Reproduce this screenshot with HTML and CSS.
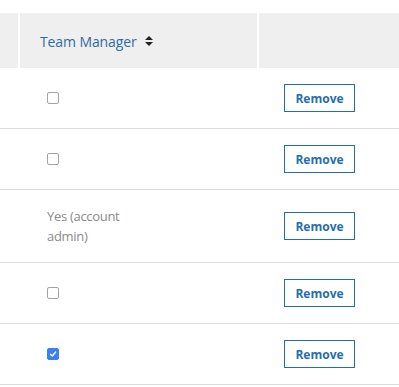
FILE: index.html
```html
<!DOCTYPE html>
<html lang="en">
<head>
    <meta charset="UTF-8">
    <title>Team members</title>
    <link rel="stylesheet" href="styles.css">
</head>
<body>
    <table class="members">
        <thead>
            <tr>
                <th class="col-edge"></th>
                <th class="col-manager">
                    <span class="sortable">Team Manager
                        <svg class="sort-icon" width="8" height="10" viewBox="0 0 8 10">
                            <path d="M4 0 L8 4 H0 Z" fill="#222"/>
                            <path d="M4 10 L8 6 H0 Z" fill="#222"/>
                        </svg>
                    </span>
                </th>
                <th class="col-action"></th>
            </tr>
        </thead>
        <tbody>
            <tr>
                <td class="col-edge"></td>
                <td class="col-manager"><input type="checkbox" class="check"></td>
                <td class="col-action"><button class="remove-btn">Remove</button></td>
            </tr>
            <tr>
                <td class="col-edge"></td>
                <td class="col-manager"><input type="checkbox" class="check"></td>
                <td class="col-action"><button class="remove-btn">Remove</button></td>
            </tr>
            <tr>
                <td class="col-edge"></td>
                <td class="col-manager"><span class="admin-note">Yes (account admin)</span></td>
                <td class="col-action"><button class="remove-btn">Remove</button></td>
            </tr>
            <tr>
                <td class="col-edge"></td>
                <td class="col-manager"><input type="checkbox" class="check"></td>
                <td class="col-action"><button class="remove-btn">Remove</button></td>
            </tr>
            <tr>
                <td class="col-edge"></td>
                <td class="col-manager"><input type="checkbox" class="check" checked></td>
                <td class="col-action"><button class="remove-btn">Remove</button></td>
            </tr>
        </tbody>
    </table>
</body>
</html>
```

FILE: styles.css
```css
body {
    margin: 0;
    background-color: #fff;
    font-family: "Open Sans", "Liberation Sans", sans-serif;
    overflow: hidden;
}

/* table */
.members {
    margin-top: 13px;
    border-collapse: collapse;
    width: 399px;
    table-layout: fixed;
}

.members thead .col-edge {
    width: 16px;
}

.members thead .col-manager {
    width: 216px;
    padding-left: 20px;
}

/* header */
.members thead th {
    background-color: #efefef;
    height: 55px;
    padding-top: 0;
    padding-bottom: 0;
    text-align: left;
    font-weight: normal;
}

.members thead th + th {
    border-left: 2px solid #fff;
}

.sortable {
    display: inline-flex;
    align-items: center;
    gap: 8px;
    font-size: 14px;
    color: #2c6ca4;
    letter-spacing: -0.1px;
}

/* rows */
.members tbody td {
    border-bottom: 1px solid #dcdcdc;
    padding: 16px 0;
    vertical-align: middle;
    height: 28px;
}

.members tbody .col-manager {
    padding-left: 28px;
}

.members tbody .col-action {
    padding-left: 26px;
}

.check {
    appearance: none;
    display: block;
    width: 12px;
    height: 12px;
    margin: 0;
    border: 1px solid #a3a3a3;
    border-radius: 2px;
    background-color: #fff;
}

.check:checked {
    border-color: #3b7ff0;
    background-color: #3b7ff0;
    background-image: url("data:image/svg+xml,%3Csvg xmlns='http://www.w3.org/2000/svg' viewBox='0 0 12 12'%3E%3Cpath d='M3 6.2 L5.2 8.4 L9.2 3.6' fill='none' stroke='white' stroke-width='1.6' stroke-linecap='round' stroke-linejoin='round'/%3E%3C/svg%3E");
    background-size: 100% 100%;
}

.admin-note {
    display: block;
    width: 100px;
    font-size: 13px;
    line-height: 20px;
    letter-spacing: -0.3px;
    color: #8a8a8a;
}

.remove-btn {
    display: block;
    width: 71px;
    height: 28px;
    padding: 0;
    background-color: #fff;
    border: 1px solid #1f6fb5;
    border-radius: 0;
    color: #1f6fb5;
    font-family: "Open Sans", "Liberation Sans", sans-serif;
    font-size: 12px;
    font-weight: bold;
    cursor: pointer;
}
```
